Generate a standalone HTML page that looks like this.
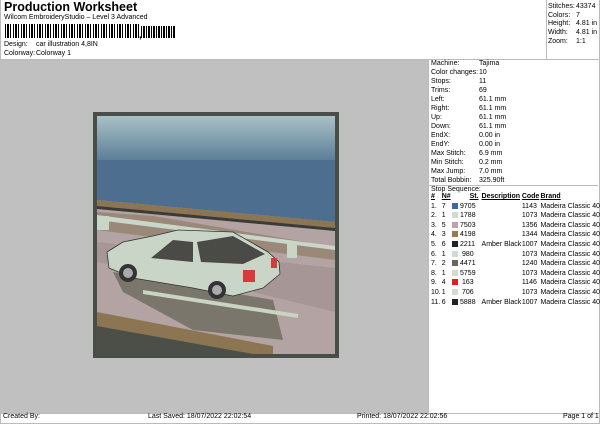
<html><head><style>
body{margin:0;width:600px;height:424px;background:#fff;font-family:"Liberation Sans",sans-serif;font-size:7px;color:#000;position:relative;overflow:hidden}
.a{position:absolute;white-space:nowrap}
.bc{position:absolute;left:5px;top:24px;height:14px;width:135px;background:repeating-linear-gradient(90deg,#000 0 1px,#fff 1px 2px,#000 2px 4px,#fff 4px 5px,#000 5px 6px,#fff 6px 8px)}
table{border-collapse:collapse;font-size:7px;line-height:9.6px}
td{padding:0;height:9.6px;line-height:9.6px;white-space:nowrap}
.sw{display:inline-block;width:6px;height:6px;vertical-align:-1px}
</style></head><body>
<div class="a" style="left:4px;top:0px;font-size:12.5px;font-weight:bold">Production Worksheet</div>
<div class="a" style="left:4px;top:14px">Wilcom EmbroideryStudio – Level 3 Advanced</div>
<div class="bc"></div>
<div class="a" style="left:141px;top:26px;width:34px;height:12px;background:repeating-linear-gradient(90deg,#000 0 1px,#fff 1px 2px,#000 2px 4px,#fff 4px 5px)"></div>
<div class="a" style="left:139px;top:30px;font-weight:bold;font-size:10px">,</div>
<div class="a" style="left:4px;top:41px">Design:</div><div class="a" style="left:36px;top:41px">car illustration 4,8IN</div>
<div class="a" style="left:4px;top:50px">Colorway:</div><div class="a" style="left:36px;top:50px">Colorway 1</div>
<div class="a" style="left:0;top:0;width:598px;height:59px;border:1px solid #bbb;border-top:none;box-sizing:content-box"></div>
<div class="a" style="left:546px;top:0;width:1px;height:59px;background:#bbb"></div>
<div class="a" style="left:548px;top:3px;line-height:8.7px">Stitches:<br>Colors:<br>Height:<br>Width:<br>Zoom:</div>
<div class="a" style="left:576px;top:3px;line-height:8.7px">43374<br>7<br>4.81 in<br>4.81 in<br>1:1</div>
<div class="a" style="left:0;top:60px;width:428px;height:353px;background:#c0c0c0"></div>
<div class="a" style="left:428px;top:60px;width:170px;height:353px;border-left:1px solid #bbb;border-right:1px solid #bbb"></div>
<div class="a" style="left:431px;top:59px;line-height:9px">Machine:<br>Color changes:<br>Stops:<br>Trims:<br>Left:<br>Right:<br>Up:<br>Down:<br>EndX:<br>EndY:<br>Max Stitch:<br>Min Stitch:<br>Max Jump:<br>Total Bobbin:</div>
<div class="a" style="left:479px;top:59px;line-height:9px">Tajima<br>10<br>11<br>69<br>61.1 mm<br>61.1 mm<br>61.1 mm<br>61.1 mm<br>0.00 in<br>0.00 in<br>6.9 mm<br>0.2 mm<br>7.0 mm<br>325.90ft</div>
<div class="a" style="left:429px;top:185px;width:169px;height:1px;background:#bbb"></div>
<div class="a" style="left:431px;top:186px">Stop Sequence:</div>
<table class="a" style="left:431px;top:192px">
<tr style="font-weight:bold;text-decoration:underline"><td style="width:12px">#</td><td style="width:12px">N#</td><td style="width:30px;text-align:right">St.</td><td style="width:41px;padding-left:3px">Description</td><td style="width:20px">Code</td><td>Brand</td></tr>
<tr><td>1.</td><td>7</td><td><span class="sw" style="background:#3f66a8"></span> 9705</td><td></td><td>1143</td><td>Madeira Classic 40</td></tr>
<tr><td>2.</td><td>1</td><td><span class="sw" style="background:#d0dccf"></span> 1788</td><td></td><td>1073</td><td>Madeira Classic 40</td></tr>
<tr><td>3.</td><td>5</td><td><span class="sw" style="background:#c4a0ae"></span> 7503</td><td></td><td>1356</td><td>Madeira Classic 40</td></tr>
<tr><td>4.</td><td>3</td><td><span class="sw" style="background:#9a7850"></span> 4198</td><td></td><td>1344</td><td>Madeira Classic 40</td></tr>
<tr><td>5.</td><td>6</td><td><span class="sw" style="background:#222"></span> 2211</td><td style="padding-left:3px">Amber Black</td><td>1007</td><td>Madeira Classic 40</td></tr>
<tr><td>6.</td><td>1</td><td><span class="sw" style="background:#d0dccf"></span> &nbsp;980</td><td></td><td>1073</td><td>Madeira Classic 40</td></tr>
<tr><td>7.</td><td>2</td><td><span class="sw" style="background:#6e6460"></span> 4471</td><td></td><td>1240</td><td>Madeira Classic 40</td></tr>
<tr><td>8.</td><td>1</td><td><span class="sw" style="background:#d0dccf"></span> 5759</td><td></td><td>1073</td><td>Madeira Classic 40</td></tr>
<tr><td>9.</td><td>4</td><td><span class="sw" style="background:#e02020"></span> &nbsp;163</td><td></td><td>1146</td><td>Madeira Classic 40</td></tr>
<tr><td>10.</td><td>1</td><td><span class="sw" style="background:#d0dccf"></span> &nbsp;706</td><td></td><td>1073</td><td>Madeira Classic 40</td></tr>
<tr><td>11.</td><td>6</td><td><span class="sw" style="background:#222"></span> 5888</td><td style="padding-left:3px">Amber Black</td><td>1007</td><td>Madeira Classic 40</td></tr>
</table>
<div class="a" style="left:0;top:413px;width:598px;height:9px;border:1px solid #bbb"></div>
<div class="a" style="left:3px;top:413px">Created By:</div>
<div class="a" style="left:148px;top:413px">Last Saved: 18/07/2022 22:02:54</div>
<div class="a" style="left:357px;top:413px">Printed: 18/07/2022 22:02:56</div>
<div class="a" style="left:563px;top:413px">Page 1 of 1</div>
<svg class="a" style="left:93px;top:112px" width="246" height="246" viewBox="0 0 246 246">
<defs><linearGradient id="sk" x1="0" y1="0" x2="0" y2="1"><stop offset="0" stop-color="#a9c1c6"/><stop offset="1" stop-color="#5c7f98"/></linearGradient></defs>
<rect width="246" height="246" fill="#4a4e48"/>
<rect x="4" y="4" width="238" height="238" fill="#b3a3a2"/>
<rect x="4" y="4" width="238" height="44" fill="url(#sk)"/>
<polygon points="4,48 242,48 242,110 4,88" fill="#4d6e8f"/>
<polygon points="4,88 242,110 242,116 4,94" fill="#8b7552"/>
<polygon points="4,94 242,116 242,119 4,97" fill="#3a3a38"/>
<polygon points="4,100 60,104 242,135 242,148 4,118" fill="#9a8878"/>
<polygon points="4,103 242,134 242,138 4,108" fill="#cad6c9"/>
<polygon points="4,130 242,156 242,200 160,180 60,160 4,150" fill="#9d8f8d" opacity=".6"/>
<polygon points="20,160 180,188 190,228 100,218 30,180" fill="#7b766c"/>
<polygon points="4,200 180,234 180,242 4,242" fill="#8b7552"/>
<polygon points="4,214 160,242 4,242" fill="#4b4f48"/>
<polygon points="50,178 205,202 205,206 50,182" fill="#c9d4c3"/>
<rect x="4" y="104" width="12" height="14" fill="#c9d6c7"/>
<rect x="194" y="130" width="10" height="16" fill="#c9d6c7"/>
<polygon points="14,140 30,130 60,124 85,118 140,120 175,140 186,150 187,162 170,176 140,184 100,176 40,166 16,156" fill="#c9d6c7" stroke="#333" stroke-width=".8"/>
<polygon points="58,146 80,128 100,130 100,150" fill="#4a4a46"/>
<polygon points="104,130 140,124 172,142 150,152 108,150" fill="#4a4a46"/>
<rect x="150" y="158" width="12" height="12" fill="#d63a3a"/>
<rect x="178" y="146" width="6" height="10" fill="#d63a3a"/>
<circle cx="35" cy="161" r="9" fill="#333"/><circle cx="35" cy="161" r="5" fill="#aaa"/>
<circle cx="124" cy="178" r="9" fill="#333"/><circle cx="124" cy="178" r="5" fill="#aaa"/>
</svg>
</body></html>
